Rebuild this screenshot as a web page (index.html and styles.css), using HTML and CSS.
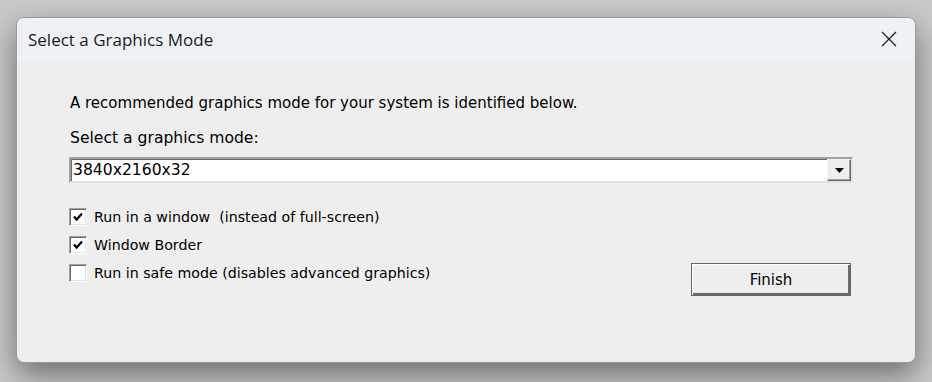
FILE: index.html
```html
<!DOCTYPE html>
<html lang="en">

<head>
    <meta charset="UTF-8">
    <meta name="viewport" content="width=device-width, initial-scale=1.0">
    <title>Select a Graphics Mode</title>
    <link rel="stylesheet" href="styles.css">
</head>

<body>
    <div class="window">
        <div class="titlebar">
            <span class="title">Select a Graphics Mode</span>
            <svg class="close" width="16" height="16" viewBox="0 0 16 16">
                <path d="M1 1 L15 15 M15 1 L1 15" stroke="#1c1c1c" stroke-width="1.2" fill="none"/>
            </svg>
        </div>
        <div class="content">
            <p class="text">A recommended graphics mode for your system is identified below.</p>
            <p class="text label">Select a graphics mode:</p>
            <div class="combo">
                <span class="combo-value">3840x2160x32</span>
                <span class="combo-btn">
                    <svg width="9" height="5" viewBox="0 0 9 5"><path d="M0 0 H9 L4.5 5 Z" fill="#000"/></svg>
                </span>
            </div>
            <div class="bottom">
                <div class="checks">
                    <label class="check">
                        <span class="box">
                            <svg width="10" height="10" viewBox="0 0 10 10"><path d="M1 4.5 L3.6 7.5 L9 1.5" stroke="#000" stroke-width="2.2" fill="none"/></svg>
                        </span>
                        <span>Run in a window&nbsp; (instead of full-screen)</span>
                    </label>
                    <label class="check">
                        <span class="box">
                            <svg width="10" height="10" viewBox="0 0 10 10"><path d="M1 4.5 L3.6 7.5 L9 1.5" stroke="#000" stroke-width="2.2" fill="none"/></svg>
                        </span>
                        <span>Window Border</span>
                    </label>
                    <label class="check">
                        <span class="box"></span>
                        <span>Run in safe mode (disables advanced graphics)</span>
                    </label>
                </div>
                <button class="finish">Finish</button>
            </div>
        </div>
    </div>
</body>
</html>
```

FILE: styles.css
```css
body {
    margin: 0;
    height: 382px;
    overflow: hidden;
    background: #c9c9c9;
    padding: 17px 0 0 16px;
    box-sizing: border-box;
}

.window {
    width: 900px;
    height: 346px;
    box-sizing: border-box;
    border: 1px solid #9a9a9a;
    border-radius: 8px;
    background: #eeeeee;
    overflow: hidden;
    box-shadow: 0 12px 30px rgba(0, 0, 0, 0.45);
    display: flex;
    flex-direction: column;
}

.titlebar {
    height: 42px;
    background: #eef2f7;
    display: flex;
    align-items: center;
    justify-content: space-between;
    padding: 0 18px 0 11px;
    flex-shrink: 0;
}

.title {
    font-family: "Open Sans", sans-serif;
    font-size: 17px;
    color: #1a1a1a;
}

.content {
    padding: 34px 62px 0 52px;
    font-family: "DejaVu Sans", sans-serif;
    font-size: 15px;
    color: #000;
}

.text {
    margin: 0 0 0 1px;
    height: 18px;
    line-height: 18px;
}

.label {
    margin-top: 17px;
    font-size: 15.6px;
}

.combo {
    margin-top: 10px;
    height: 26px;
    box-sizing: border-box;
    background: #fff;
    border: 2px solid;
    border-color: #a0a0a0 #e3e3e3 #e3e3e3 #a0a0a0;
    box-shadow: inset 1px 1px 0 #696969;
    display: flex;
    align-items: center;
    justify-content: space-between;
}

.combo-value {
    padding-left: 2px;
    font-size: 15.6px;
}

.combo-btn {
    width: 24px;
    height: 22px;
    box-sizing: border-box;
    background: #efefef;
    border: 1px solid;
    border-color: #f4f4f4 #696969 #696969 #f4f4f4;
    box-shadow: inset -1px -1px 0 #a0a0a0;
    display: flex;
    align-items: center;
    justify-content: center;
}

.bottom {
    display: flex;
    justify-content: space-between;
    align-items: flex-start;
    margin-top: 25px;
    padding-right: 2px;
}

.checks {
    display: flex;
    flex-direction: column;
    gap: 10px;
    font-size: 14.2px;
}

.check {
    display: flex;
    align-items: center;
    gap: 7px;
    height: 18px;
}

.box {
    width: 18px;
    height: 18px;
    box-sizing: border-box;
    background: #fff;
    border: 1px solid;
    border-color: #a0a0a0 #ffffff #ffffff #a0a0a0;
    box-shadow: inset 1px 1px 0 #696969, inset -1px -1px 0 #e3e3e3;
    display: flex;
    align-items: center;
    justify-content: center;
    padding: 0 1px 1px 0;
}

.finish {
    margin-top: 55px;
    width: 160px;
    height: 33px;
    box-sizing: border-box;
    background: #eeeeee;
    border: 1px solid #646464;
    box-shadow: inset 1px 1px 0 #ffffff, inset -2px -2px 0 #6a6a6a;
    font-family: "DejaVu Sans", sans-serif;
    font-size: 15px;
    color: #000;
    padding: 0;
}
```
